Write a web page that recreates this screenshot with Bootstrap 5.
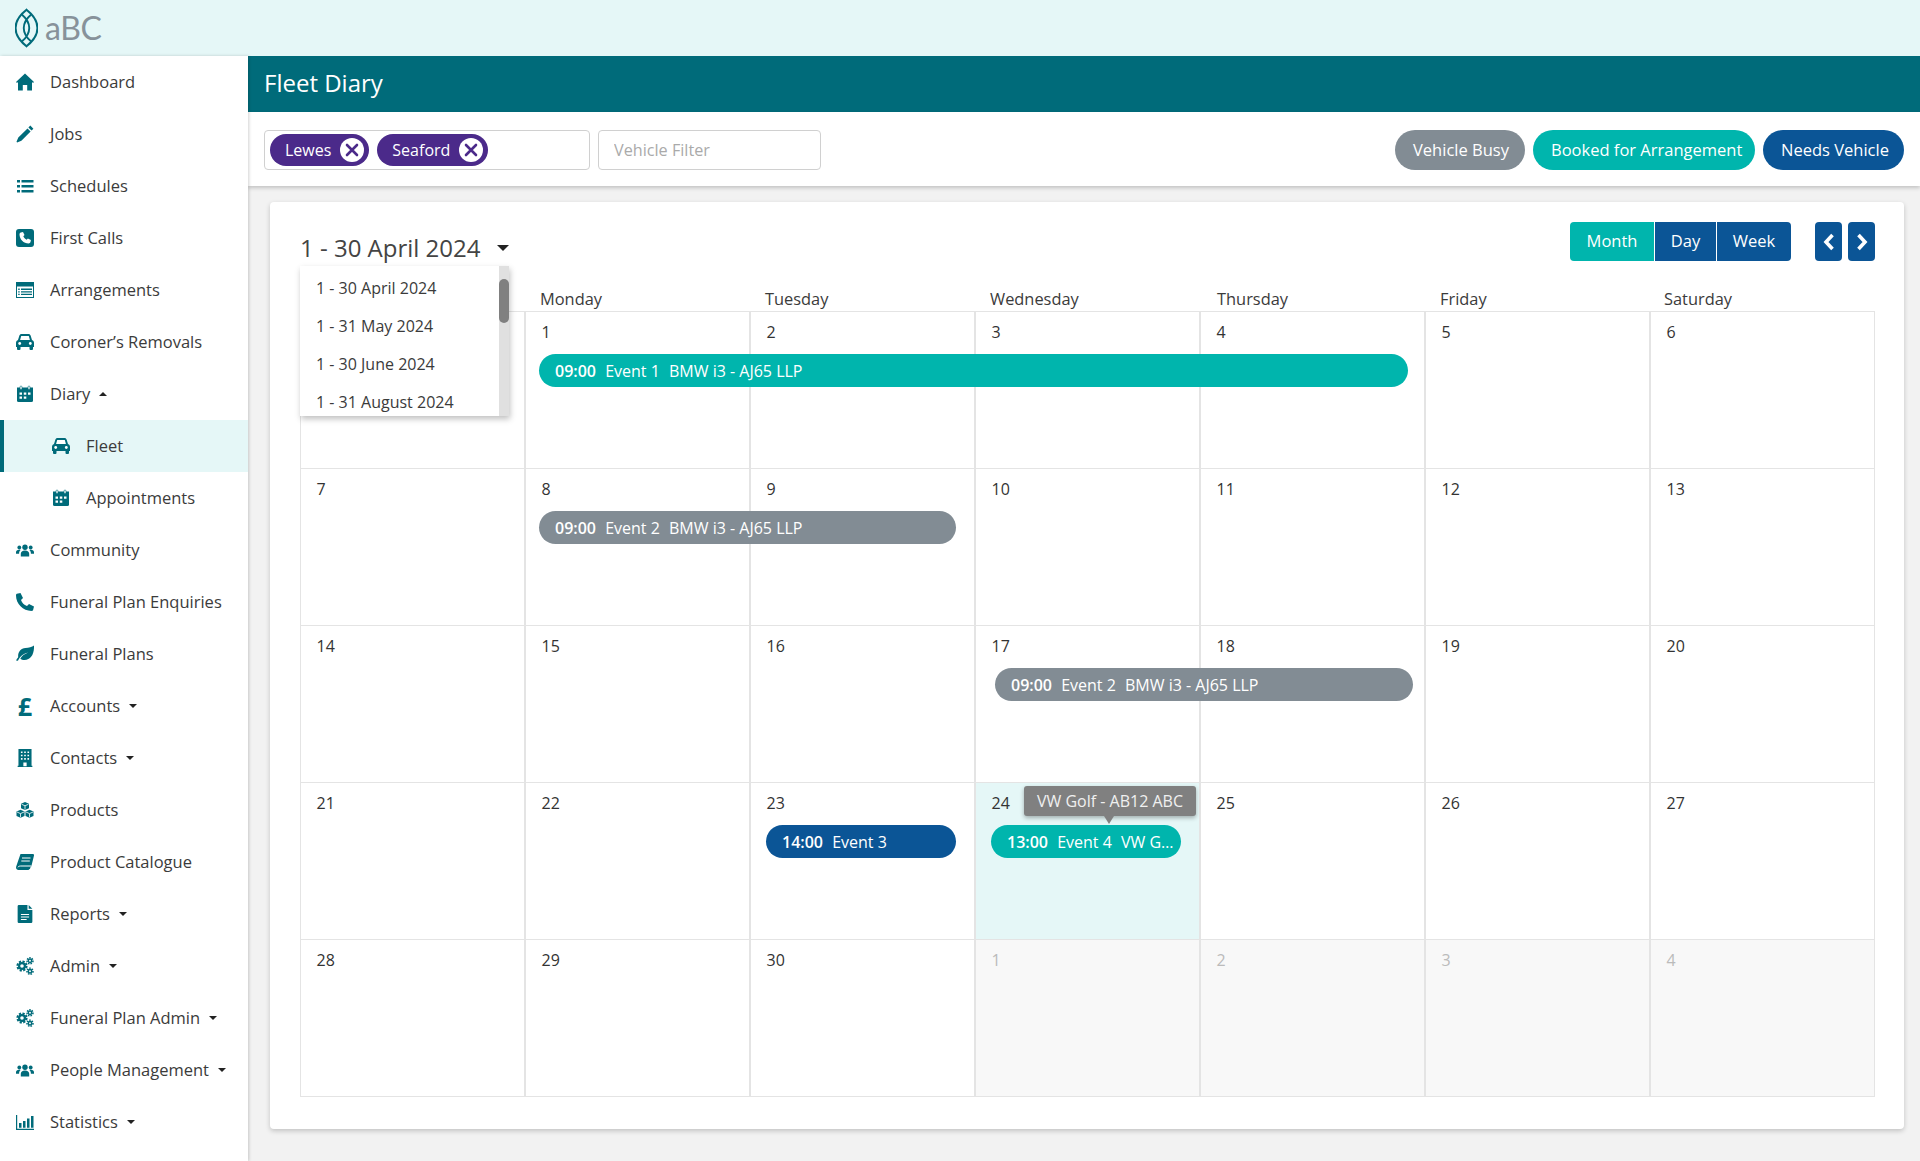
<!DOCTYPE html>
<html lang="en">
<head>
<meta charset="utf-8">
<title>Fleet Diary</title>
<link href="https://cdn.jsdelivr.net/npm/bootstrap@5.3.0/dist/css/bootstrap.min.css" rel="stylesheet">
<style>
:root{--teal:#006b7a;--mint:#e5f7f7;--aqua:#00b5ad;--navy:#0b5596;--slate:#828c94;--ink:#3b3b3b;--line:#e4e4e4}
html,body{height:100%}
body{font-family:"Open Sans","Liberation Sans",sans-serif;font-size:16px;color:var(--ink);background:#f2f2f2;overflow:hidden}
.top-strip{height:56px;background:var(--mint);padding-left:15px;gap:7px}
.brand-word{font-family:Lato,"Open Sans",sans-serif;font-size:32px;line-height:1;color:#87929a;letter-spacing:-.4px}
.shell{height:1105px}
.side{width:248px;flex:none;background:#fff;box-shadow:1px 0 3px rgba(0,0,0,.18);position:relative;z-index:2}
.side .nav-link{height:52px;display:flex;align-items:center;padding:0 0 0 16px;color:var(--ink);font-size:16.5px}
.side .nav-link.sub{padding-left:52px}
.side .nav-link.on{background:var(--mint);border-left:4px solid var(--teal);padding-left:48px}
.ico{width:18px;height:18px;flex:none;margin-right:16px;fill:var(--teal);overflow:visible}
.pound{width:18px;margin-right:16px;text-align:center;font-weight:700;font-size:25px;line-height:1;color:var(--teal)}
.caret-d,.caret-u{display:inline-block;margin-left:9px;border-left:4px solid transparent;border-right:4px solid transparent}
.caret-d{border-top:4px solid #222}
.caret-u{border-bottom:4px solid #222}
.main-col{min-width:0}
.title-bar{height:56px;background:var(--teal);color:#fff;font-size:24px;padding:0 0 2px 16px;margin:0;font-weight:400}
.filter-bar{height:74px;background:#fff;box-shadow:0 2px 4px rgba(0,0,0,.2);padding:2px 16px 0;position:relative}
.field-box{height:40px;border:1px solid #d0d0d0;border-radius:4px;background:#fff}
.field-chips{width:326px;padding:0 5px;gap:8px}
.field-text{width:223px;margin-left:8px;padding:0 15px;font-size:16.2px;color:var(--ink)}
.field-text::placeholder{color:#aaa}
.chip{height:32px;background:#4b2a8a;color:#fff;padding:0 5px 0 15px;gap:9px;line-height:32px;font-size:16px}
.chip-x{width:24px;height:24px;background:#fff;border-radius:50%;flex:none}
.chip-x svg{width:24px;height:24px;display:block}
.pill{height:40px;border:0;color:#fff;font-size:16.5px;padding:0 0 0 18px;border-radius:20px;text-align:left;white-space:nowrap}
.w-busy{width:130px}.w-booked{width:222px}.w-needs{width:141px}
.pill:hover,.tab-b:hover,.nav-b:hover{color:#fff}
.bg-slate{background:var(--slate)}.bg-aqua{background:var(--aqua)}.bg-navy{background:var(--navy)}
.bg-slate:hover{background:var(--slate)}.bg-aqua:hover{background:var(--aqua)}.bg-navy:hover{background:var(--navy)}
.sheet{margin:16px 16px 0 22px;height:927px;background:#fff;border-radius:4px;box-shadow:0 2px 5px rgba(0,0,0,.2);padding:20px 29px 0 30px;position:relative}
.tools{height:39px}
.period{font-size:24px;font-weight:400;margin:9px 0 0;line-height:33px;color:#444;display:flex;align-items:center}
.period .caret-d{margin-left:16px;border-left-width:6px;border-right-width:6px;border-top-width:6px}
.tab-b{height:39px;border:0;color:#fff;font-size:16.5px;padding:0;border-radius:4px;display:flex;align-items:center;justify-content:center}
.sheet .btn-group>.tab-b.tab-b+.tab-b{margin-left:1px}
.w-month{width:84px}.w-day{width:61px}.w-week{width:74px}
.nav-pair{gap:6px}
.nav-b{height:39px;width:27px;border:0;border-radius:4px;padding:0;display:flex;align-items:center;justify-content:center}
.nav-b svg{width:12px;height:18px}
.period-menu{left:30px;top:64px;width:209px;height:150px;padding:0;margin:0;border:0;border-radius:0;overflow:hidden;box-shadow:1px 3px 6px rgba(0,0,0,.25);z-index:20}
.period-menu .dropdown-item{height:38px;padding:0 16px;display:flex;align-items:center;font-size:16px;color:var(--ink)}
.period-menu .dropdown-item:first-child{margin-top:3px}
.rail{position:absolute;right:0;top:0;bottom:0;width:10px;background:#e0e0e0}
.rail-thumb{position:absolute;left:0;top:13px;width:10px;height:44px;border-radius:5px;background:#808080}
.week-heads,.month-grid{display:grid;grid-template-columns:repeat(7,225px)}
.week-heads{height:50px;align-items:end;padding-bottom:1px}
.week-heads span{padding-left:15px;line-height:22px;font-size:16.4px}
.week-heads span:nth-child(5){padding-left:17px}
.week-heads span:nth-child(7){padding-left:14px}
.month-grid{grid-auto-rows:157px;border-top:1px solid var(--line);margin-top:0}
.day{position:relative;border-left:1px solid var(--line);border-right:1px solid var(--line);border-bottom:1px solid var(--line);padding:9px 0 0 15.5px;line-height:22px;color:#333}
.day.today{background:var(--mint)}
.day.off{background:#f8f8f8;color:#bbb}
.ev{position:absolute;top:42px;height:33px;border-radius:17px;color:#fff;line-height:34px;padding:0 7px 0 16px;white-space:nowrap;overflow:hidden;text-overflow:ellipsis;z-index:3}
.ev b{font-weight:600;margin-right:5px}
.ev i{font-style:normal;margin-right:5px}
.ev-a{left:13px;width:869px}
.ev-b{left:13px;width:417px}
.ev-c{left:19px;width:418px}
.ev-d{left:15px;width:190px}
.hint{position:absolute;left:48px;top:3px;width:172px;height:30px;background:#808080;color:#f0f0f0;border-radius:3px;line-height:30px;text-align:center;font-size:16px;box-shadow:0 2px 4px rgba(0,0,0,.3);z-index:4}
.hint::after{content:"";position:absolute;left:80px;top:30px;border-left:5px solid transparent;border-right:5px solid transparent;border-top:8px solid #808080}
</style>
</head>
<body>
<svg width="0" height="0" class="d-block position-absolute">
<defs>
<symbol id="i-home" viewBox="0 0 18 18"><path d="M9 .5 18.500 9.500h-2.500V17.500h-4.800v-5.500H6.800v5.500H2V9.500H-.5z"/></symbol>
<symbol id="i-pen" viewBox="0 0 18 18"><path d="M14.300.6l3.100 3.100-1.900 1.900-3.100-3.100zM11.500 3.400l3.100 3.100-9.200 9.200-4.300 1.700-.6-.6 1.800-4.200z"/></symbol>
<symbol id="i-list" viewBox="0 0 18 18"><path d="M1 3h3v2.500H1zM1 8h3v2.500H1zM1 13h3v2.500H1zM5.500 3H17.500v2.500H5.500zM5.500 8H17.500v2.500H5.500zM5.500 13H17.500v2.500H5.500z"/></symbol>
<symbol id="i-pbox" viewBox="0 0 18 18"><rect width="18" height="18" rx="3"/><path fill="#fff" d="M4.800 3.400 7 3l1.500 3-1.200 1.300c.6 1.500 1.800 2.700 3.300 3.400l1.300-1.300 3 1.500-.4 2.200c-.2.900-1 1.300-1.800 1.300C7.600 14.400 3.500 10.300 3.500 5.200c0-.8.500-1.500 1.300-1.800z"/></symbol>
<symbol id="i-form" viewBox="0 0 18 18"><path fill-rule="evenodd" d="M0 1h18v16H0zM1 5.500V16h16V5.500z"/><path d="M1 2h16v2H1zM5 7.500h11V9H5zM5 10.200h11v1.300H5zM5 12.700h11V14H5zM2.200 7.500h1.500V9H2.200zM2.200 10.200h1.500v1.300H2.200zM2.200 12.700h1.500V14H2.200z"/></symbol>
<symbol id="i-car" viewBox="0 0 18 18"><path d="M3.400 2.600C3.700 1.700 4.500 1 5.500 1h7c1 0 1.800.7 2.100 1.600L16 7c1.200.5 2 1.500 2 2.800V14h-1v2a1 1 0 0 1-1 1h-1.500a1 1 0 0 1-1-1v-2h-9v2a1 1 0 0 1-1 1H2a1 1 0 0 1-1-1v-2H0V9.800C0 8.500.8 7.500 2 7z"/><path fill="#fff" d="M5.200 3h7.600l1.100 4H4.100z"/><circle cx="3.700" cy="10.500" r="1.400" fill="#fff"/><circle cx="14.300" cy="10.500" r="1.400" fill="#fff"/></symbol>
<symbol id="i-cal" viewBox="0 0 18 18"><path d="M1 2.500h16V15.500a1.500 1.500 0 0 1-1.500 1.500h-13A1.500 1.500 0 0 1 1 15.500z"/><g fill="#fff"><rect x="4" y="1" width="2" height="3.500" rx="1" stroke="#006b7a" stroke-width=".6"/><rect x="12" y="1" width="2" height="3.500" rx="1" stroke="#006b7a" stroke-width=".6"/><path d="M3.500 7.500h2.500v2.200H3.500zM7.800 7.500h2.500v2.200H7.800zM12 7.500h2.500v2.200H12zM3.500 11.500h2.500v2.200H3.500zM7.800 11.500h2.500v2.200H7.800z"/></g></symbol>
<symbol id="i-users" viewBox="0 0 18 18"><circle cx="9" cy="6.200" r="2.700"/><circle cx="3.300" cy="6.500" r="1.900"/><circle cx="14.700" cy="6.500" r="1.900"/><path d="M4.800 15.500v-2.700c0-2 1.500-3.400 4.200-3.400s4.200 1.400 4.200 3.400v2.700zM0 12.800v-1.600c0-1.500 1.100-2.500 3.200-2.500.6 0 1 .1 1.400.2-1.100.9-1.500 1.900-1.500 3.900zM18 12.800v-1.600c0-1.500-1.100-2.500-3.200-2.500-.6 0-1 .1-1.400.2 1.100.9 1.500 1.900 1.500 3.900z"/></symbol>
<symbol id="i-phone" viewBox="0 0 18 18"><path d="M.8.800 4.500 0 7 5 5 7c1 3 3 5 6 6l2-2 5 2.500-.9 3.600c-.2.600-.9.900-1.600.9C7 18 0 11 0 2.600 0 1.800.2 1 .8.800z"/></symbol>
<symbol id="i-leaf" viewBox="0 0 18 18"><path d="M18 .5c.4 8.500-3 14.500-9.500 14.500-1.800 0-3.200-.5-4.200-1.300 1.500-2.800 4-4.700 8-6.200-4 .8-6.800 2.700-8.600 5.300-.6.900-1.300 2-1.800 3L0 15.500c.6-1.100 1.400-2.200 2.200-3.200C1.700 7 4.500 3.500 9.500 3c3.300-.4 6.500-.7 8.500-2.500z"/></symbol>
<symbol id="i-bldg" viewBox="0 0 18 22"><path fill-rule="evenodd" d="M1 0h16v20.500h1V22H0v-1.500h1zM4 3v2h2V3zM8 3v2h2V3zM12 3v2h2V3zM4 7v2h2V7zM8 7v2h2V7zM12 7v2h2V7zM4 11v2h2v-2zM8 11v2h2v-2zM12 11v2h2v-2zM7 16.500V21h4v-4.500z"/></symbol>
<symbol id="i-cubes" viewBox="0 0 18 18"><path d="M9 1l4 1.800v4.400L9 9 5 7.200V2.800z"/><path d="M5.500 3.200 9 4.800l3.500-1.600M9 4.800V8.500" fill="none" stroke="#fff" stroke-width=".8"/><g transform="translate(-4.500 7.800)"><path d="M9 1l4 1.800v4.400L9 9 5 7.200V2.800z"/><path d="M5.500 3.200 9 4.800l3.500-1.600M9 4.800V8.500" fill="none" stroke="#fff" stroke-width=".8"/></g><g transform="translate(4.500 7.800)"><path d="M9 1l4 1.800v4.400L9 9 5 7.200V2.800z"/><path d="M5.500 3.200 9 4.800l3.500-1.600M9 4.800V8.500" fill="none" stroke="#fff" stroke-width=".8"/></g></symbol>
<symbol id="i-book" viewBox="0 0 18 18"><path d="M4.500 1H17c.8 0 1.200.6 1 1.400l-2.700 11.200c-.4 1.900-1.600 3.400-3.500 3.400H2.500C.7 17-.4 15.300.2 13.500z"/><path fill="none" stroke="#fff" stroke-width="1" d="M6 5h8.500M5.300 8h8.500M1.800 14.300c1-1.200 2-1.300 3-1.300h10.700M15.300 13.600c-.3 1.300-.9 2.200-1.800 3.400"/></symbol>
<symbol id="i-file" viewBox="0 0 18 22"><path d="M1.500 0H12v6h6v14.500a1.500 1.500 0 0 1-1.500 1.500h-15A1.500 1.500 0 0 1 0 20.500v-19A1.500 1.500 0 0 1 1.500 0zM13.500 0 18 4.500h-4.500z"/><path fill="#fff" d="M4 11h10v1.300H4zM4 14h10v1.300H4zM4 17h7v1.300H4z"/></symbol>
<symbol id="i-cogs" viewBox="0 0 18 18"><g fill="none" stroke="#006b7a"><circle cx="6" cy="9" r="2.900" stroke-width="2.200"/><circle cx="6" cy="9" r="4.600" stroke-width="2" stroke-dasharray="2.200 1.400"/><circle cx="14" cy="3.800" r="1.700" stroke-width="1.500"/><circle cx="14" cy="3.800" r="3" stroke-width="1.500" stroke-dasharray="1.500 1.100"/><circle cx="14" cy="14.200" r="1.700" stroke-width="1.500"/><circle cx="14" cy="14.200" r="3" stroke-width="1.500" stroke-dasharray="1.500 1.100"/></g></symbol>
<symbol id="i-chart" viewBox="0 0 18 18"><path d="M0 2h1.200v13.800H18V17H0zM3 10h2.500v4.800H3zM7 8h2.500v6.800H7zM11 5.500h2.500v9.300H11zM15 3h2.500v11.800H15z"/></symbol>
</defs>
</svg>

<header class="top-strip d-flex align-items-center">
  <svg width="23" height="40" viewBox="0 0 22 38" fill="none" stroke="#006b7a" stroke-width="2"><path d="M11 1.500C25 12.500 25 25.500 11 36.500-3 25.500-3 12.500 11 1.500z"/><path stroke-width="1.800" d="M15.500 6C6 14 6 24 15.500 32M6.500 6C16 14 16 24 6.500 32"/></svg>
  <span class="brand-word">aBC</span>
</header>

<div class="shell d-flex">
  <nav class="side nav flex-column flex-nowrap">
    <a class="nav-link" href="#"><svg class="ico"><use href="#i-home"/></svg>Dashboard</a>
    <a class="nav-link" href="#"><svg class="ico"><use href="#i-pen"/></svg>Jobs</a>
    <a class="nav-link" href="#"><svg class="ico"><use href="#i-list"/></svg>Schedules</a>
    <a class="nav-link" href="#"><svg class="ico"><use href="#i-pbox"/></svg>First Calls</a>
    <a class="nav-link" href="#"><svg class="ico"><use href="#i-form"/></svg>Arrangements</a>
    <a class="nav-link" href="#"><svg class="ico"><use href="#i-car"/></svg>Coroner’s Removals</a>
    <a class="nav-link" href="#"><svg class="ico"><use href="#i-cal"/></svg>Diary<span class="caret-u"></span></a>
    <a class="nav-link sub on" href="#"><svg class="ico"><use href="#i-car"/></svg>Fleet</a>
    <a class="nav-link sub" href="#"><svg class="ico"><use href="#i-cal"/></svg>Appointments</a>
    <a class="nav-link" href="#"><svg class="ico"><use href="#i-users"/></svg>Community</a>
    <a class="nav-link" href="#"><svg class="ico"><use href="#i-phone"/></svg>Funeral Plan Enquiries</a>
    <a class="nav-link" href="#"><svg class="ico"><use href="#i-leaf"/></svg>Funeral Plans</a>
    <a class="nav-link" href="#"><span class="pound">£</span>Accounts<span class="caret-d"></span></a>
    <a class="nav-link" href="#"><svg class="ico"><use href="#i-bldg"/></svg>Contacts<span class="caret-d"></span></a>
    <a class="nav-link" href="#"><svg class="ico"><use href="#i-cubes"/></svg>Products</a>
    <a class="nav-link" href="#"><svg class="ico"><use href="#i-book"/></svg>Product Catalogue</a>
    <a class="nav-link" href="#"><svg class="ico"><use href="#i-file"/></svg>Reports<span class="caret-d"></span></a>
    <a class="nav-link" href="#"><svg class="ico"><use href="#i-cogs"/></svg>Admin<span class="caret-d"></span></a>
    <a class="nav-link" href="#"><svg class="ico"><use href="#i-cogs"/></svg>Funeral Plan Admin<span class="caret-d"></span></a>
    <a class="nav-link" href="#"><svg class="ico"><use href="#i-users"/></svg>People Management<span class="caret-d"></span></a>
    <a class="nav-link" href="#"><svg class="ico"><use href="#i-chart"/></svg>Statistics<span class="caret-d"></span></a>
  </nav>

  <main class="main-col flex-grow-1">
    <h1 class="title-bar d-flex align-items-center">Fleet Diary</h1>
    <div class="filter-bar d-flex align-items-center">
      <div class="field-box field-chips d-flex align-items-center">
        <span class="chip rounded-pill d-flex align-items-center">Lewes<span class="chip-x"><svg viewBox="0 0 24 24" fill="none" stroke="#4b2a8a" stroke-width="2.600" stroke-linecap="round"><path d="M7 7l10 10M17 7 7 17"/></svg></span></span>
        <span class="chip rounded-pill d-flex align-items-center">Seaford<span class="chip-x"><svg viewBox="0 0 24 24" fill="none" stroke="#4b2a8a" stroke-width="2.600" stroke-linecap="round"><path d="M7 7l10 10M17 7 7 17"/></svg></span></span>
      </div>
      <input class="field-box field-text form-control" type="text" placeholder="Vehicle Filter">
      <div class="ms-auto d-flex gap-2">
        <button class="btn pill w-busy bg-slate" type="button">Vehicle Busy</button>
        <button class="btn pill w-booked bg-aqua" type="button">Booked for Arrangement</button>
        <button class="btn pill w-needs bg-navy" type="button">Needs Vehicle</button>
      </div>
    </div>

    <section class="sheet">
      <div class="tools d-flex align-items-start">
        <h2 class="period">1 - 30 April 2024<span class="caret-d"></span></h2>
        <div class="btn-group ms-auto">
          <button class="btn tab-b w-month bg-aqua" type="button">Month</button>
          <button class="btn tab-b w-day bg-navy" type="button">Day</button>
          <button class="btn tab-b w-week bg-navy" type="button">Week</button>
        </div>
        <div class="nav-pair d-flex ms-4">
          <button class="btn nav-b bg-navy" type="button" aria-label="Previous"><svg viewBox="0 0 12 18" fill="none" stroke="#fff" stroke-width="3.600"><path d="M9.500 2 3 9l6.500 7"/></svg></button>
          <button class="btn nav-b bg-navy" type="button" aria-label="Next"><svg viewBox="0 0 12 18" fill="none" stroke="#fff" stroke-width="3.600"><path d="M2.500 2 9 9l-6.500 7"/></svg></button>
        </div>
      </div>

      <div class="dropdown-menu show period-menu">
        <a class="dropdown-item" href="#">1 - 30 April 2024</a>
        <a class="dropdown-item" href="#">1 - 31 May 2024</a>
        <a class="dropdown-item" href="#">1 - 30 June 2024</a>
        <a class="dropdown-item" href="#">1 - 31 August 2024</a>
        <div class="rail"><div class="rail-thumb"></div></div>
      </div>

      <div class="week-heads">
        <span></span><span>Monday</span><span>Tuesday</span><span>Wednesday</span><span>Thursday</span><span>Friday</span><span>Saturday</span>
      </div>
      <div class="month-grid">
        <div class="day"></div>
        <div class="day">1<div class="ev ev-a bg-aqua"><b>09:00</b> <i>Event 1</i> BMW i3 - AJ65 LLP</div></div>
        <div class="day">2</div><div class="day">3</div><div class="day">4</div><div class="day">5</div><div class="day">6</div>
        <div class="day">7</div>
        <div class="day">8<div class="ev ev-b bg-slate"><b>09:00</b> <i>Event 2</i> BMW i3 - AJ65 LLP</div></div>
        <div class="day">9</div><div class="day">10</div><div class="day">11</div><div class="day">12</div><div class="day">13</div>
        <div class="day">14</div><div class="day">15</div><div class="day">16</div>
        <div class="day">17<div class="ev ev-c bg-slate"><b>09:00</b> <i>Event 2</i> BMW i3 - AJ65 LLP</div></div>
        <div class="day">18</div><div class="day">19</div><div class="day">20</div>
        <div class="day">21</div><div class="day">22</div>
        <div class="day">23<div class="ev ev-d bg-navy"><b>14:00</b> <i>Event 3</i></div></div>
        <div class="day today">24<div class="hint">VW Golf - AB12 ABC</div><div class="ev ev-d bg-aqua"><b>13:00</b> <i>Event 4</i> VW Golf - AB12 ABC</div></div>
        <div class="day">25</div><div class="day">26</div><div class="day">27</div>
        <div class="day">28</div><div class="day">29</div><div class="day">30</div>
        <div class="day off">1</div><div class="day off">2</div><div class="day off">3</div><div class="day off">4</div>
      </div>
    </section>
  </main>
</div>
</body>
</html>
